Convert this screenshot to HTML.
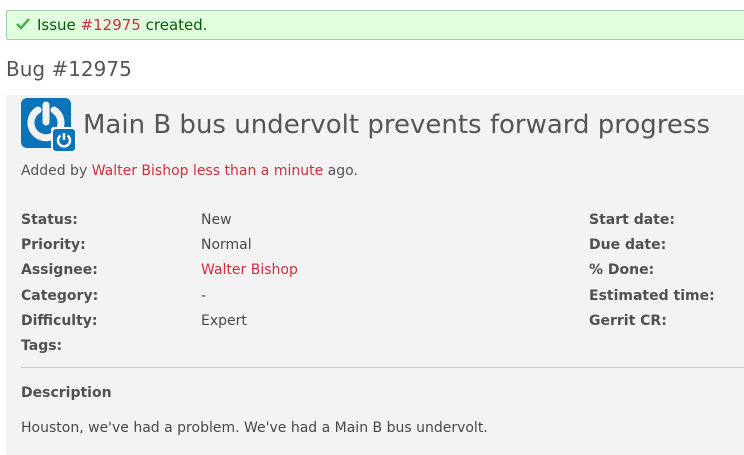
<!DOCTYPE html>
<html><head><meta charset="utf-8"><style>
body{margin:0;width:744px;height:433px;overflow:hidden;background:#fff;font-family:"DejaVu Sans","Liberation Sans",sans-serif;color:#484848;font-size:14px;position:relative}
.abs{position:absolute;white-space:nowrap}
.flash{position:absolute;left:6px;top:10px;width:750px;height:28px;background:#dfffdf;border:1px solid #9fcf9f;border-radius:2px}
a{color:#d22d3d;text-decoration:none}
.box{position:absolute;left:6px;top:95px;width:760px;height:360px;background:#f3f3f3}
b{color:#505050}
</style></head><body>
<div class="flash"></div>
<svg class="abs" style="left:15px;top:17px" width="16" height="14" viewBox="0 0 16 14"><path d="M2 7 L6 11 L14 2" fill="none" stroke="#4caf50" stroke-width="2.6"/></svg>
<div class="abs" style="left:37px;top:16px;font-size:15px;color:#005f00">Issue <a>#12975</a> created.</div>
<div class="abs" style="left:6px;top:57px;font-size:20px;color:#555">Bug #12975</div>
<div class="box"></div>
<svg class="abs" style="left:21px;top:98px" width="56" height="56" viewBox="0 0 56 56">
<rect x="0" y="0" width="50" height="50" rx="6" fill="#0b73b8"/>
<path d="M17 12 A15 15 0 1 0 33 12" fill="none" stroke="#f2f2f2" stroke-width="7" stroke-linecap="round"/>
<line x1="25" y1="7" x2="25" y2="24" stroke="#f2f2f2" stroke-width="7" stroke-linecap="round"/>
<rect x="30" y="29" width="26" height="26" rx="3" fill="#fff"/>
<rect x="32" y="31" width="22" height="22" rx="3" fill="#0b73b8"/>
<path d="M39.5 37.5 A6 6 0 1 0 46.5 37.5" fill="none" stroke="#fff" stroke-width="2.5"/>
<line x1="43" y1="35" x2="43" y2="42" stroke="#fff" stroke-width="2.5"/>
</svg>
<div class="abs" style="left:83px;top:110px;font-size:26px;color:#555">Main B bus undervolt prevents forward progress</div>
<div class="abs" style="left:21px;top:163px;color:#555">Added by <a>Walter Bishop</a> <a>less than a minute</a> ago.</div>
<div class="abs" style="left:21px;top:208px;line-height:25.2px"><b>Status:</b><br><b>Priority:</b><br><b>Assignee:</b><br><b>Category:</b><br><b>Difficulty:</b><br><b>Tags:</b></div>
<div class="abs" style="left:201px;top:208px;line-height:25.2px">New<br>Normal<br><a>Walter Bishop</a><br>-<br>Expert</div>
<div class="abs" style="left:589px;top:208px;line-height:25.2px"><b>Start date:</b><br><b>Due date:</b><br><b>% Done:</b><br><b>Estimated time:</b><br><b>Gerrit CR:</b></div>
<div class="abs" style="left:21px;top:367px;width:730px;height:1px;background:#ccc"></div>
<div class="abs" style="left:21px;top:385px"><b>Description</b></div>
<div class="abs" style="left:21px;top:420px">Houston, we've had a problem. We've had a Main B bus undervolt.</div>
</body></html>
